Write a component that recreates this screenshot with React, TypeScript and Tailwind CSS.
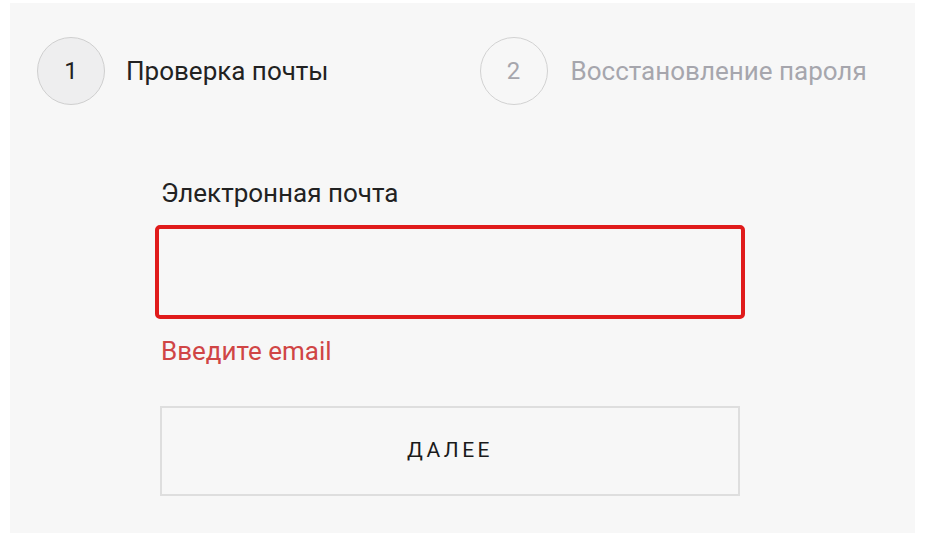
import React from "react";

export default function App() {
  return (
    <div className="w-[930px] h-[540px] bg-white" style={{ fontFamily: "Roboto, 'Noto Sans', sans-serif" }}>
      <div className="ml-[10px] mt-[3px] w-[905px] h-[530px] bg-[#f7f7f7] flex flex-col">
        <div className="flex items-center mt-[34px] ml-[27px]">
          <div className="w-[68px] h-[68px] rounded-full bg-[#eeeeef] border border-[#cfcfcf] flex items-center justify-center text-[24px] text-[#222]">1</div>
          <div className="ml-[21px] text-[26px] text-[#222] leading-[30px]">Проверка почты</div>
          <div className="ml-[151px] w-[68px] h-[68px] rounded-full border border-[#d2d2d2] flex items-center justify-center text-[24px] text-[#a6a6ad]">2</div>
          <div className="ml-[23px] text-[26px] text-[#a6a6ad] leading-[30px]">Восстановление пароля</div>
        </div>
        <div className="ml-[145px] w-[590px] mt-[73px] flex flex-col">
          <div className="ml-[6px] text-[26px] text-[#222] leading-[30px]">Электронная почта</div>
          <div className="mt-[17px] h-[94px] border-[4px] border-[#e01b1b] rounded-[5px]"></div>
          <div className="ml-[6px] mt-[17px] text-[26px] text-[#d04545] leading-[30px]">Введите email</div>
          <div className="ml-[5px] mt-[40px] w-[580px] h-[90px] border-2 border-[#dedede] flex items-center justify-center text-[21px] tracking-[3.5px] text-[#1a1a1a]">ДАЛЕЕ</div>
        </div>
      </div>
    </div>
  );
}
